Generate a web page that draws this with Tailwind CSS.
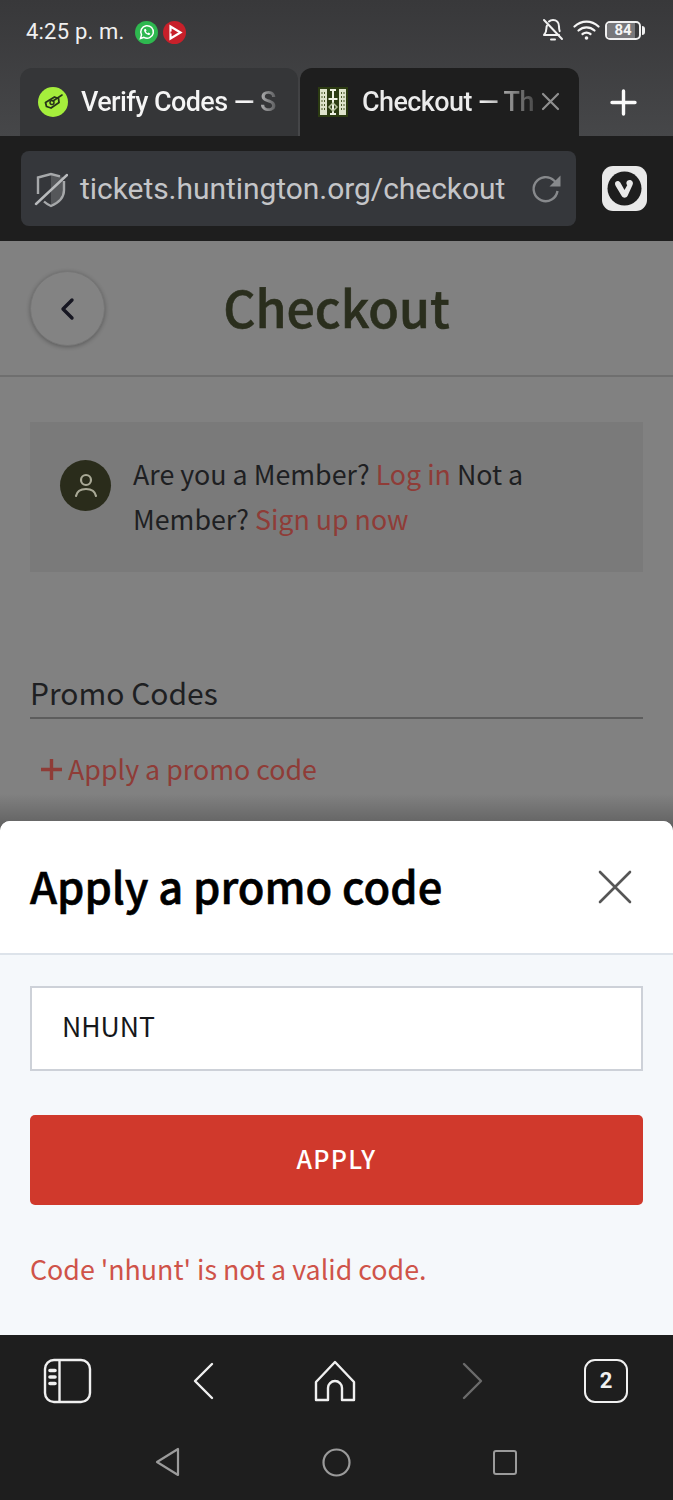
<!DOCTYPE html>
<html lang="en">
<head>
  <meta charset="UTF-8" />
  <meta name="viewport" content="width=device-width, initial-scale=1.0"/>
  <title>Checkout</title>
  <script src="https://cdn.jsdelivr.net/npm/@tailwindcss/browser@4"></script>
</head>
<body class="bg-[#1e1e1e]">
  <div class="w-[673px] h-[1500px] overflow-hidden flex flex-col font-['Roboto',sans-serif]">

    <!-- status bar + tabs -->
    <div class="h-[136px] shrink-0 bg-gradient-to-b from-[#38383a] to-[#464749] flex flex-col">
      <div class="h-[68px] shrink-0 flex items-start justify-between pl-[26px] pr-[28px] pt-[19px]">
        <div class="flex items-center">
          <span class="text-[22px] leading-[26px] text-[#f0f0f0] tracking-[0.2px] w-[109px]">4:25 p. m.</span>
          <svg class="w-[23px] h-[23px]" viewBox="0 0 23 23">
            <circle cx="11.5" cy="11.5" r="11.5" fill="#2eb84f"/>
            <path d="M5.5 17.5l1-3.6a6.3 6.3 0 1 1 2.4 2.5z" fill="none" stroke="#fff" stroke-width="1.5"/>
            <path d="M9 8.5c0 3 2.500 5.500 5.500 5.500l.8-1.600-1.900-.9-.8.8c-.8-.4-1.400-1-1.800-1.800l.8-.8-.9-1.900z" fill="#fff"/>
          </svg>
          <svg class="w-[23px] h-[23px] ml-[5px]" viewBox="0 0 23 23">
            <circle cx="11.500" cy="11.500" r="11.500" fill="#c8202a"/>
            <path d="M7.500 5.500L17.500 11.500L7.500 17.500Z" fill="none" stroke="#fff" stroke-width="2.200"/>
            <path d="M7.500 11.500h4" stroke="#c8202a" stroke-width="2"/>
          </svg>
        </div>
        <div class="flex items-center -mt-[1px]">
          <svg class="w-[22px] h-[24px]" viewBox="0 0 22 24" fill="none" stroke="#f2f2f2" stroke-width="2" stroke-linecap="round" stroke-linejoin="round">
            <path d="M2 2l18 19"/>
            <path d="M5 7.500c-.5 1-.6 2-.6 3 0 3.500-1 5-2.400 6.500h15"/>
            <path d="M7 3.500c1-.9 2.500-1.500 4-1.500 3.500 0 6 2.500 6 6.500 0 2 .2 3.500.7 4.700"/>
            <path d="M9 21.500h4"/>
          </svg>
          <svg class="w-[27px] h-[22px] ml-[9px]" viewBox="0 0 27 22" fill="none" stroke="#f5f5f5" stroke-width="2.200" stroke-linecap="round">
            <path d="M1.500 7.500c7-6.500 17-6.500 24 0"/>
            <path d="M5.500 11.500c4.800-4.200 11.200-4.200 16 0"/>
            <path d="M9.500 15c2.500-1.800 5.500-1.800 8 0"/>
            <circle cx="13.500" cy="19" r="1.800" fill="#f5f5f5" stroke="none"/>
          </svg>
          <div class="ml-[5px] flex items-center">
            <div class="relative w-[36px] h-[19px] rounded-[5px] border-2 border-[#f0f0f0] flex items-center justify-center overflow-hidden">
              <div class="absolute left-0 top-0 bottom-0 w-[28px] bg-[#77777a]"></div>
              <span class="relative text-[15px] leading-none font-bold text-[#f5f5f5]">84</span>
            </div>
            <div class="w-[3px] h-[9px] ml-[1px] rounded-r-sm bg-[#f0f0f0]"></div>
          </div>
        </div>
      </div>

      <div class="flex-1 flex pl-[20px]">
        <div class="w-[278px] h-[68px] shrink-0 rounded-t-[12px] bg-[#353638] flex items-center pl-[18px] pb-[1px] overflow-hidden">
          <svg class="w-[30px] h-[30px] shrink-0" viewBox="0 0 30 30">
            <circle cx="15" cy="15" r="15" fill="#a5ee3c"/>
            <path d="M7.500 15.500l9-5.500 4 1.500 .5 4-8 5.500-4.500-1.500z" fill="none" stroke="#26331a" stroke-width="1.800" stroke-linejoin="round"/>
            <circle cx="14" cy="15.500" r="2" fill="none" stroke="#26331a" stroke-width="1.500"/>
            <path d="M15 14l9-6" stroke="#26331a" stroke-width="1.600" stroke-linecap="round"/>
          </svg>
          <div class="ml-[13px] text-[27px] leading-[34px] font-medium whitespace-nowrap bg-gradient-to-r from-[#f5f5f5] from-[86%] to-[#5c5d5f] to-[100%] bg-clip-text text-transparent tracking-[-0.6px]">Verify Codes — S</div>
        </div>
        <div class="w-[279px] h-[68px] shrink-0 ml-[2px] rounded-t-[12px] bg-[#1e1e1e] flex items-center pl-[18px] pb-[1px]">
          <svg class="w-[30px] h-[30px] shrink-0" viewBox="0 0 30 30">
            <rect width="30" height="30" fill="#2c3b12"/>
            <rect x="2" y="2" width="7" height="26" fill="#dfe4cc"/>
            <rect x="21" y="2" width="7" height="26" fill="#dfe4cc"/>
            <path d="M4 5v20M6.500 5v20M23.500 5v20M26 5v20" stroke="#4c5a2b" stroke-width="1" stroke-dasharray="2 2"/>
            <path d="M12 3h6M12 27h6M15 3v24M10.500 12h9" stroke="#eef0e2" stroke-width="2"/>
            <path d="M11 20l4-4 4 4-4 4z" fill="none" stroke="#b4c09c" stroke-width="1.500"/>
          </svg>
          <div class="ml-[14px] text-[27px] leading-[34px] font-medium whitespace-nowrap bg-gradient-to-r from-[#ececec] from-[70%] to-[#4a4a4a] to-[100%] bg-clip-text text-transparent tracking-[-0.6px]">Checkout — Th</div>
          <svg class="w-[19px] h-[19px] ml-[7px] shrink-0" viewBox="0 0 19 19" stroke="#8f8f8f" stroke-width="2.200" stroke-linecap="round">
            <path d="M2 2l15 15M17 2L2 17"/>
          </svg>
        </div>
        <div class="flex-1 flex items-center justify-center pr-[5px]">
          <svg class="w-[27px] h-[27px]" viewBox="0 0 27 27" stroke="#fafafa" stroke-width="3.400" stroke-linecap="round">
            <path d="M13.500 2v23M2 13.500h23"/>
          </svg>
        </div>
      </div>
    </div>

    <!-- address bar -->
    <div class="h-[105px] shrink-0 bg-[#1e1e1e] flex items-center pl-[21px] pr-[26px]">
      <div class="w-[555px] h-[75px] rounded-[8px] bg-[#35373b] flex items-center pl-[13px] pr-[13px]">
        <svg class="w-[34px] h-[38px] shrink-0" viewBox="0 0 34 38" fill="none">
          <path d="M17 4l12 3v12c0 8-5 13-12 16z" fill="#55575a" stroke="none"/>
          <path d="M4 24V7.500L17 4l9 2.400M30 11v9c0 8-6 13-13 16-3-1.300-5-2.600-7-4.500" stroke="#a6a8aa" stroke-width="2.400"/>
          <path d="M2 34L33 5" stroke="#b8babc" stroke-width="2.400" stroke-linecap="round"/>
        </svg>
        <span class="ml-[12px] text-[30px] leading-[38px] text-[#c4c5c8] whitespace-nowrap w-[426px] tracking-[-0.05px]">tickets.huntington.org/checkout</span>
        <svg class="w-[31px] h-[31px] ml-[25px] shrink-0" viewBox="0 0 31 31" fill="none">
          <path d="M26.500 18a12 12 0 1 1-3.500-10.500l3 3" stroke="#87898c" stroke-width="2.400"/>
          <path d="M29.500 2.500v11h-11z" fill="#87898c"/>
        </svg>
      </div>
      <div class="ml-[26px] w-[45px] h-[45px] rounded-[11px] bg-[#e9e9e9] flex items-center justify-center">
        <svg class="w-[35px] h-[35px]" viewBox="0 0 35 35">
          <circle cx="17.500" cy="17.500" r="17" fill="#1e1e1e"/>
          <path d="M8 12.500c0-3 4-3.500 5.300-1l4.200 7.500 2.700-4.800c-1.800-2.200-.3-5.200 2.300-5.200 2.800 0 4.300 2.700 3 5L20.500 25c-1.300 2.300-4.500 2.300-5.800 0L8.700 15c-.5-.8-.7-1.600-.7-2.500z" fill="#e9e9e9"/>
        </svg>
      </div>
    </div>

    <!-- dimmed page -->
    <div class="h-[588px] shrink-0 bg-[#818181] font-['Noto_Sans_CJK_SC',sans-serif] relative">
      <div class="h-[136px] border-b-2 border-[#6f6f6f] flex items-center relative pb-[5px]">
        <div class="absolute left-[30px] top-[30px] w-[75px] h-[75px] rounded-full bg-[#838383] border border-[#767676] shadow-[0_1px_4px_rgba(0,0,0,0.3)] flex items-center justify-center">
          <svg class="w-[15px] h-[24px]" viewBox="0 0 15 24" fill="none" stroke="#171722" stroke-width="3.400" stroke-linecap="round" stroke-linejoin="round">
            <path d="M12 3L3 12l9 9"/>
          </svg>
        </div>
        <h1 class="w-full text-center text-[50px] leading-[60px] font-medium [-webkit-text-stroke:0.6px_#2a2e1d] text-[#2a2e1d]">Checkout</h1>
      </div>

      <div class="mx-[30px] mt-[45px] h-[150px] bg-[#7a7a7a] flex pl-[30px] pt-[29px]">
        <div class="w-[51px] h-[51px] mt-[9px] rounded-full bg-[#2a2c1b] flex items-center justify-center shrink-0">
          <svg class="w-[24px] h-[26px]" viewBox="0 0 24 26" fill="none" stroke="#a9a996" stroke-width="2.200" stroke-linecap="round">
            <circle cx="12" cy="7" r="5"/>
            <path d="M2 23c1-5 5-7 10-7s9 2 10 7"/>
          </svg>
        </div>
        <p class="ml-[22px] w-[420px] text-[26.8px] leading-[45px] text-[#1e1f22]">Are you a Member? <span class="text-[#8f3c37]">Log in</span> Not a Member? <span class="text-[#8f3c37]">Sign up now</span></p>
      </div>

      <div class="mx-[30px] mt-[96px] border-b-2 border-[#5d5d5d] h-[51px] text-[30px] leading-[48px] text-[#1e1f22]">Promo Codes</div>
      <div class="ml-[40px] mt-[27px] flex items-center text-[#8f3c37] text-[26.8px] leading-[46px]">
        <svg class="w-[23px] h-[23px] shrink-0" viewBox="0 0 23 23" stroke="#8f3c37" stroke-width="3.400">
          <path d="M11.500 1v21M1 11.500h21"/>
        </svg>
        <span class="ml-[5px]">Apply a promo code</span>
      </div>
      <div class="absolute left-0 right-0 bottom-0 h-[35px] bg-gradient-to-b from-transparent to-[#5f5f5f]"></div>
    </div>

    <!-- bottom sheet -->
    <div class="h-[514px] shrink-0 -mt-[8px] relative rounded-t-[10px] overflow-hidden bg-[#f5f8fb] font-['Noto_Sans_CJK_SC',sans-serif] flex flex-col">
      <div class="h-[134px] shrink-0 bg-white border-b-2 border-[#dde3ea] flex items-center justify-between pl-[30px] pr-[41px]">
        <h2 class="text-[43.5px] leading-[56px] font-medium [-webkit-text-stroke:0.6px_#000] text-black -mt-[3px]">Apply a promo code</h2>
        <svg class="w-[34px] h-[34px]" viewBox="0 0 34 34" stroke="#565656" stroke-width="2.600" stroke-linecap="round">
          <path d="M2 2l30 30M32 2L2 32"/>
        </svg>
      </div>
      <div class="mx-[30px] mt-[31px] h-[85px] bg-white border-2 border-[#cdd1d8] flex items-center pl-[30px] pb-[5px] text-[26.6px] text-[#15171a]">NHUNT</div>
      <div class="mx-[30px] mt-[44px] h-[90px] rounded-[5px] bg-[#d0392c] flex items-center justify-center pb-[3px] text-white text-[25px] font-medium tracking-[1.300px]">APPLY</div>
      <p class="ml-[30px] mt-[41px] text-[26.8px] leading-[46px] text-[#cf5349]">Code 'nhunt' is not a valid code.</p>
    </div>

    <!-- browser toolbar + android nav -->
    <div class="flex-1 bg-[#1e1e1e] relative z-10">
      <div class="h-[90px] flex items-center justify-between pl-[43px] pr-[45px] pt-[1px]">
        <svg class="w-[49px] h-[46px]" viewBox="0 0 49 46" fill="none" stroke="#f0f0f0" stroke-width="2.400">
          <rect x="2" y="2" width="45" height="42" rx="9"/>
          <path d="M16.500 2v42"/>
          <path d="M7 12.500h5M7 19h5M7 25.500h5" stroke-width="3.600" stroke-linecap="round"/>
        </svg>
        <svg class="w-[22px] h-[38px] -ml-[1px]" viewBox="0 0 22 38" fill="none" stroke="#f0f0f0" stroke-width="2.400" stroke-linecap="round" stroke-linejoin="round">
          <path d="M20 2L3 19l17 17"/>
        </svg>
        <svg class="w-[42px] h-[42px]" viewBox="0 0 42 42" fill="none" stroke="#f0f0f0" stroke-width="2.400" stroke-linejoin="round">
          <path d="M21 2L40 22v18H28V28a7 7 0 0 0-14 0v12H2V22z"/>
        </svg>
        <svg class="w-[22px] h-[38px] ml-[5px]" viewBox="0 0 22 38" fill="none" stroke="#6b6b6b" stroke-width="2.400" stroke-linecap="round" stroke-linejoin="round">
          <path d="M2 2l17 17L2 36"/>
        </svg>
        <div class="w-[44px] h-[44px] rounded-[11px] border-[2.5px] border-[#f0f0f0] flex items-center justify-center text-[22px] font-bold text-[#f0f0f0]">2</div>
      </div>
      <div class="flex items-center justify-between pl-[155px] pr-[156px] pt-[22px]">
        <svg class="w-[25px] h-[30px]" viewBox="0 0 25 30" fill="none" stroke="#9b9b9b" stroke-width="2.200" stroke-linejoin="round">
          <path d="M23 2v26L2 15z"/>
        </svg>
        <svg class="w-[29px] h-[29px]" viewBox="0 0 29 29" fill="none" stroke="#9b9b9b" stroke-width="2.200">
          <circle cx="14.500" cy="14.500" r="13"/>
        </svg>
        <div class="w-[24px] h-[25px] rounded-[3px] border-2 border-[#9b9b9b]"></div>
      </div>
    </div>
  </div>
</body>
</html>
